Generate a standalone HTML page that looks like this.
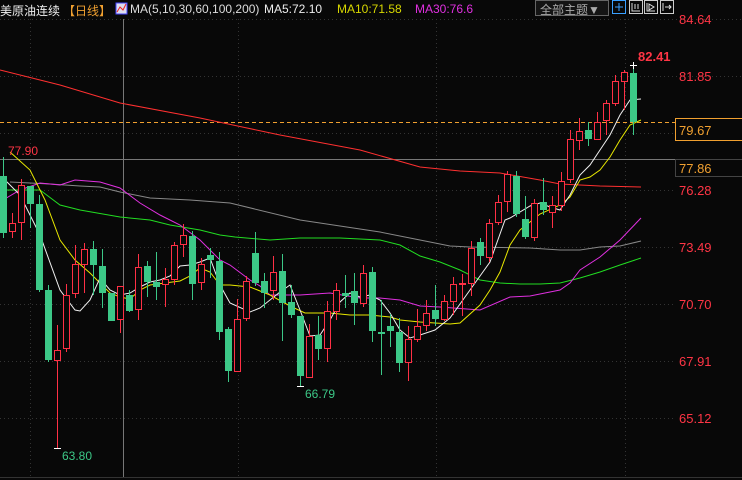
<!DOCTYPE html>
<html><head><meta charset="utf-8"><style>
html,body{margin:0;padding:0;background:#080808;width:742px;height:480px;overflow:hidden;font-family:"Liberation Sans","Noto Sans CJK SC",sans-serif}
.t{position:absolute;top:2px;font-size:12px;white-space:nowrap}
.ax{position:absolute;left:679px;font-size:13px;color:#ff3545}
</style></head><body>
<svg id="s" width="742" height="480" style="position:absolute;left:0;top:0">
<g stroke="#333" stroke-dasharray="1,3" stroke-width="1">
<line x1="0" y1="19.5" x2="742" y2="19.5"/><line x1="0" y1="76.5" x2="742" y2="76.5"/><line x1="0" y1="133.5" x2="675" y2="133.5"/><line x1="0" y1="190.5" x2="675" y2="190.5"/><line x1="0" y1="247.5" x2="675" y2="247.5"/><line x1="0" y1="304.5" x2="675" y2="304.5"/><line x1="0" y1="361.5" x2="675" y2="361.5"/><line x1="0" y1="418.5" x2="675" y2="418.5"/>
<line x1="30.5" y1="19" x2="30.5" y2="477"/><line x1="238.5" y1="19" x2="238.5" y2="477"/><line x1="436.5" y1="19" x2="436.5" y2="477"/><line x1="625.5" y1="19" x2="625.5" y2="477"/>
</g>
<line x1="0" y1="159.5" x2="675" y2="159.5" stroke="#777"/>
<line x1="123.5" y1="19" x2="123.5" y2="477" stroke="#777"/>
<line x1="0" y1="122.5" x2="675" y2="122.5" stroke="#f0a030" stroke-dasharray="4,3"/>
<line x1="0" y1="477.5" x2="742" y2="477.5" stroke="#333"/>
<g fill="none" stroke-width="1">
<polyline stroke="#ff3030" points="0,70 60,85 120,103 200,118 280,135 360,150 420,167 460,171 500,173 540,180 560,184 600,186 641,187"/>
<polyline stroke="#888" points="10,182 50,184 80,186 100,187 120,192 150,198 190,200 230,203 300,220 380,232 420,240 450,246 470,247 530,248 560,250 580,250 600,247 620,246 641,241"/>
<polyline stroke="#22dd22" points="0,190 40,190 60,205 80,210 120,217 150,220 170,225 200,230 220,235 235,237 270,240 300,238 340,238 380,240 400,245 420,256 440,262 460,270 480,280 500,283 520,284 540,284 560,283 580,278 600,272 620,265 641,258"/>
<polyline stroke="#e030e0" points="3,200 20,190 40,183 60,185 75,180 100,182 120,188 140,203 160,215 180,225 200,240 220,260 230,265 250,280 260,286 270,295 300,295 330,293 360,298 380,298 400,300 420,306 440,307 480,310 510,297 530,296 550,292 560,290 570,283 580,270 600,257 620,240 641,218"/>
<polyline stroke="#e8e800" points="10,152 30,170 45,200 60,240 75,260 90,273 100,283 110,293 120,297 130,299 140,290 150,285 165,283 180,281 190,276 200,268 210,272 220,285 230,285 250,287 270,295 290,306 305,313 330,313 350,315 370,315 390,317 400,320 420,322 450,324 460,323 480,305 490,290 500,272 510,245 520,230 540,214 560,205 570,197 580,180 590,177 600,170 610,157 620,140 630,125 641,120"/>
<polyline stroke="#f0f0f0" points="3,178 20,195 40,235 60,290 75,310 80,311 90,300 100,278 110,290 120,295 130,293 140,287 150,282 160,280 170,276 180,266 190,265 200,262 210,258 220,285 230,303 250,312 260,308 280,292 290,285 300,310 310,336 320,335 330,320 340,302 350,293 360,297 370,295 380,300 390,313 400,330 410,338 420,335 435,330 450,318 470,290 490,262 505,220 510,218 530,206 540,203 550,207 560,210 570,195 580,175 590,165 600,150 610,135 620,115 630,100 641,99"/>
</g>
<g id="c"></g>
<g stroke="#fff"><line x1="54" y1="448.5" x2="61" y2="448.5"/><line x1="297" y1="386.5" x2="304" y2="386.5"/><line x1="630" y1="65.5" x2="637" y2="65.5"/><line x1="633.5" y1="62" x2="633.5" y2="69"/></g>
<rect x="675.5" y="118.5" width="70" height="22" fill="#080808" stroke="#f0a030"/>
<rect x="675.5" y="159.5" width="70" height="17" fill="#080808" stroke="#444"/>
<rect x="535.5" y="0.5" width="73" height="15" fill="#141414" stroke="#666"/>
<g fill="#080808" stroke="#ccc"><rect x="612.5" y="0.5" width="13" height="13" stroke="#3aa0ff"/><rect x="629.5" y="0.5" width="13" height="13"/><rect x="644.5" y="0.5" width="13" height="13"/><rect x="660.5" y="0.5" width="13" height="13"/></g>
<g stroke="#3aa0ff"><line x1="619" y1="3" x2="619" y2="11"/><line x1="615" y1="7" x2="623" y2="7"/></g>
<g stroke="#ddd" fill="none"><path d="M632 3v8h8M635 4v5M638 4v5"/><path d="M647 3v8h8M649 4l5 3-5 3z"/><path d="M663 3v8M665 7h6M669 5l2 2-2 2"/></g>
<rect x="116" y="3" width="11" height="11" fill="#dde" stroke="#44f"/><path d="M117 12l3-5 3 3 3-6" stroke="#e22" fill="none"/>
</svg>
<div class="t" style="left:0;color:#eee">美原油连续</div>
<div class="t" style="left:63px;color:#f0a030">【日线】</div>
<div class="t" style="left:130px;color:#ddd">MA(5,10,30,60,100,200)</div>
<div class="t" style="left:264px;color:#eee">MA5:72.10</div>
<div class="t" style="left:337px;color:#d8d800">MA10:71.58</div>
<div class="t" style="left:415px;color:#e030e0">MA30:76.6</div>
<div class="t" style="left:540px;top:1px;color:#aaa;font-size:12px">全部主题▼</div>
<div class="ax" style="top:12px">84.64</div>
<div class="ax" style="top:69px">81.85</div>
<div class="ax" style="top:123px;color:#f0a030">79.67</div>
<div class="ax" style="top:161px;color:#f0a030">77.86</div>
<div class="ax" style="top:183px">76.28</div>
<div class="ax" style="top:240px">73.49</div>
<div class="ax" style="top:297px">70.70</div>
<div class="ax" style="top:354px">67.91</div>
<div class="ax" style="top:411px">65.12</div>
<div style="position:absolute;left:638px;top:49px;color:#ff3545;font-size:13px;font-weight:bold">82.41</div>
<div style="position:absolute;left:8px;top:144px;color:#ff3545;font-size:12px">77.90</div>
<div style="position:absolute;left:62px;top:449px;color:#3cc887;font-size:12px">63.80</div>
<div style="position:absolute;left:305px;top:387px;color:#3cc887;font-size:12px">66.79</div>
<script>
var d=[
"g,176,233,157,238","r,223,231,213,238","r,185,222,179,240","g,186,204,186,228","g,204,290,195,292","g,290,360,285,362","r,350,360,325,448","r,295,348,284,352","r,264,293,245,298","r,249,264,243,293","g,249,265,241,295","g,266,293,249,308","g,293,321,293,321","r,286,319,286,333","g,295,311,290,312","r,267,309,254,320","g,266,282,261,297","g,282,287,252,300","r,279,284,268,307","r,245,279,242,285","r,235,244,224,257","g,236,284,231,300","r,264,282,258,290","g,255,260,248,278","g,261,332,252,340","g,329,371,327,382","r,319,371,299,372",
"r,281,318,276,321","g,253,283,232,286","g,281,293,273,308","r,272,290,256,300","g,271,303,254,341","g,302,315,285,318","g,316,376,316,386","r,336,377,324,378","g,335,349,316,360","r,311,348,301,362","r,290,311,283,320","g,293,296,275,308","g,291,303,273,325","r,273,303,265,307","g,272,331,267,342","g,332,334,300,375","g,326,331,314,347","g,332,363,318,372","r,339,362,326,381","r,326,339,309,342","r,313,325,300,331","g,310,319,285,326","r,301,319,295,321","r,284,301,277,315","r,283,284,274,316","r,248,283,241,296","g,242,256,238,265","r,223,257,219,262","r,202,222,195,225","r,174,201,171,212","g,176,214,171,217","g,219,237,196,239","r,203,237,199,241","g,202,210,178,215","r,205,212,196,228","r,181,205,172,211","r,139,179,130,183","r,131,140,118,150","g,130,139,122,146","r,122,139,112,140","r,103,120,100,135","r,81,103,75,106","r,72,81,70,110","g,73,122,65,135"];
var h="";d.forEach(function(s,i){var a=s.split(","),x=3.5+i*9,t=+a[1],b=+a[2],hi=+a[3],lo=+a[4],c=a[0]=="r"?"#ff3045":"#3cc887";
h+='<line x1="'+x+'" y1="'+hi+'" x2="'+x+'" y2="'+lo+'" stroke="'+c+'"/>';
if(a[0]=="r"){h+='<rect x="'+(x-3)+'" y="'+(t+.5)+'" width="6" height="'+Math.max(b-t,1)+'" fill="#080808" stroke="'+c+'"/>';}
else h+='<rect x="'+(x-3.5)+'" y="'+t+'" width="7" height="'+Math.max(b-t,1)+'" fill="'+c+'"/>';});
document.getElementById("c").innerHTML=h;
</script>
</body></html>
